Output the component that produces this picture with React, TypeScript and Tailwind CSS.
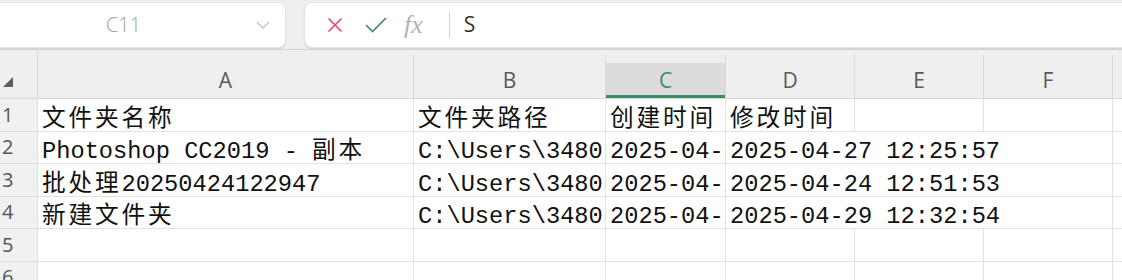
import React from "react";

const CJK = /([\u4e00-\u9fff]+)/;

function Txt({ s }: { s: string }) {
  const parts = s.split(CJK).filter((p) => p.length > 0);
  return (
    <span>
      {parts.map((p, i) =>
        /[\u4e00-\u9fff]/.test(p) ? (
          <span key={i} className="tracking-[2.8px]">
            {p}
          </span>
        ) : (
          <span key={i}>{p}</span>
        )
      )}
    </span>
  );
}

const colW = {
  A: "w-[376px]",
  B: "w-[192px]",
  C: "w-[120px]",
  D: "w-[129px]",
  E: "w-[129px]",
  F: "w-[129px]",
};

type Row = { n: number; a?: string; b?: string; c?: string; d?: string; merged?: boolean };

const rows: Row[] = [
  { n: 1, a: "文件夹名称", b: "文件夹路径", c: "创建时间", d: "修改时间" },
  {
    n: 2,
    a: "Photoshop CC2019 - 副本",
    b: "C:\\Users\\3480",
    c: "2025-04-",
    d: "2025-04-27 12:25:57",
    merged: true,
  },
  {
    n: 3,
    a: "批处理20250424122947",
    b: "C:\\Users\\3480",
    c: "2025-04-",
    d: "2025-04-24 12:51:53",
    merged: true,
  },
  {
    n: 4,
    a: "新建文件夹",
    b: "C:\\Users\\3480",
    c: "2025-04-",
    d: "2025-04-29 12:32:54",
    merged: true,
  },
  { n: 5 },
  { n: 6 },
];

const cellText =
  "[font-family:'Liberation_Mono','Noto_Sans_CJK_SC',monospace] text-[23.7px] leading-[18px] text-[#111111] whitespace-nowrap";

function Toolbar() {
  return (
    <div className="h-[49px] bg-[#efefef] flex items-start pt-[2px] overflow-hidden">
      <div className="-ml-[10px] w-[296px] h-[46px] shrink-0 bg-white rounded-[8px] border border-[#e4e4e4] shadow-[0_1px_1px_rgba(0,0,0,0.12)] flex items-center">
        <div className="w-[255px] pl-[10px] flex justify-center text-[20px] font-light text-[#a0a0a0] [font-family:'Open_Sans',sans-serif]">
          C11
        </div>
        <svg width="14" height="8" viewBox="0 0 14 8" className="ml-[10px]">
          <polyline points="1,1 7,7 13,1" fill="none" stroke="#c3c3c3" strokeWidth="1.3" />
        </svg>
      </div>
      <div className="ml-[18px] flex-1 -mr-[12px] h-[46px] bg-white rounded-[8px] border border-[#e4e4e4] shadow-[0_1px_1px_rgba(0,0,0,0.12)] flex items-center">
        <svg width="16" height="16" viewBox="0 0 16 16" className="ml-[22px]">
          <line x1="1.5" y1="1.5" x2="14.5" y2="14.5" stroke="#d9536d" strokeWidth="1.7" />
          <line x1="14.5" y1="1.5" x2="1.5" y2="14.5" stroke="#d9536d" strokeWidth="1.7" />
        </svg>
        <svg width="22" height="16" viewBox="0 0 22 16" className="ml-[22px]">
          <polyline points="1,8 7.5,14.5 21,1" fill="none" stroke="#3f8d6b" strokeWidth="1.7" />
        </svg>
        <span className="ml-[17px] text-[26px] italic text-[#b3b3b3] [font-family:'Liberation_Serif',serif] leading-none">
          fx
        </span>
        <div className="ml-[26px] w-px h-[26px] bg-[#d2d2d2]" />
        <span className="ml-[14px] text-[21px] text-[#333] [font-family:'Open_Sans',sans-serif]">S</span>
      </div>
    </div>
  );
}

function HeaderCell({ w, label, selected }: { w: string; label: string; selected?: boolean }) {
  return (
    <div className={`${w} shrink-0 h-full flex items-end`}>
      <div className="w-full h-[43px] border-r border-[#dadada] flex items-end">
        {selected ? (
          <div className="w-full h-[35px] bg-[#dcdcdc] border-b-[3px] border-[#3b8b64] flex items-end justify-center pb-[4px] text-[21px] leading-[21px] text-[#3d8a66] [font-family:'Open_Sans',sans-serif]">
            {label}
          </div>
        ) : (
          <div className="w-full flex justify-center pb-[7px] text-[21px] leading-[21px] text-[#5a5a5a] [font-family:'Open_Sans',sans-serif]">
            {label}
          </div>
        )}
      </div>
    </div>
  );
}

function HeaderRow() {
  return (
    <div className="h-[50px] flex bg-[#efefef] border-t border-[#d2d2d2] border-b border-b-[#d8d8d8]">
      <div className="w-[38px] shrink-0 flex items-end pl-[3px] pb-[11px] border-r border-[#dadada]">
        <svg width="10" height="10" viewBox="0 0 10 10">
          <polygon points="10,0 10,10 0,10" fill="#5f5f5f" />
        </svg>
      </div>
      <HeaderCell w={colW.A} label="A" />
      <HeaderCell w={colW.B} label="B" />
      <HeaderCell w={colW.C} label="C" selected />
      <HeaderCell w={colW.D} label="D" />
      <HeaderCell w={colW.E} label="E" />
      <HeaderCell w={colW.F} label="F" />
      <div className="flex-1" />
    </div>
  );
}

function Cell({ w, s }: { w: string; s?: string }) {
  return (
    <div
      className={`${w} shrink-0 h-full overflow-hidden border-r border-b border-[#e2e2e2] flex items-end pl-[4px] pb-[2px] ${cellText}`}
    >
      {s ? <Txt s={s} /> : null}
    </div>
  );
}

function DataRow({ r }: { r: Row }) {
  return (
    <div className="h-[32.5px] flex">
      <div className="w-[38px] shrink-0 h-full bg-[#f1f1f1] border-r border-b border-[#dedede] flex items-center pl-[2px] text-[20px] text-[#555] [font-family:'Open_Sans',sans-serif]">
        {r.n}
      </div>
      <Cell w={colW.A} s={r.a} />
      <Cell w={colW.B} s={r.b} />
      <Cell w={colW.C} s={r.c} />
      {r.merged ? (
        <Cell w="w-[387px]" s={r.d} />
      ) : (
        <>
          <Cell w={colW.D} s={r.d} />
          <Cell w={colW.E} />
          <Cell w={colW.F} />
        </>
      )}
      <div className="flex-1 h-full border-b border-[#e2e2e2]" />
    </div>
  );
}

export default function App() {
  return (
    <div className="w-[1122px] h-[280px] overflow-hidden bg-white">
      <Toolbar />
      <HeaderRow />
      {rows.map((r) => (
        <DataRow key={r.n} r={r} />
      ))}
    </div>
  );
}
